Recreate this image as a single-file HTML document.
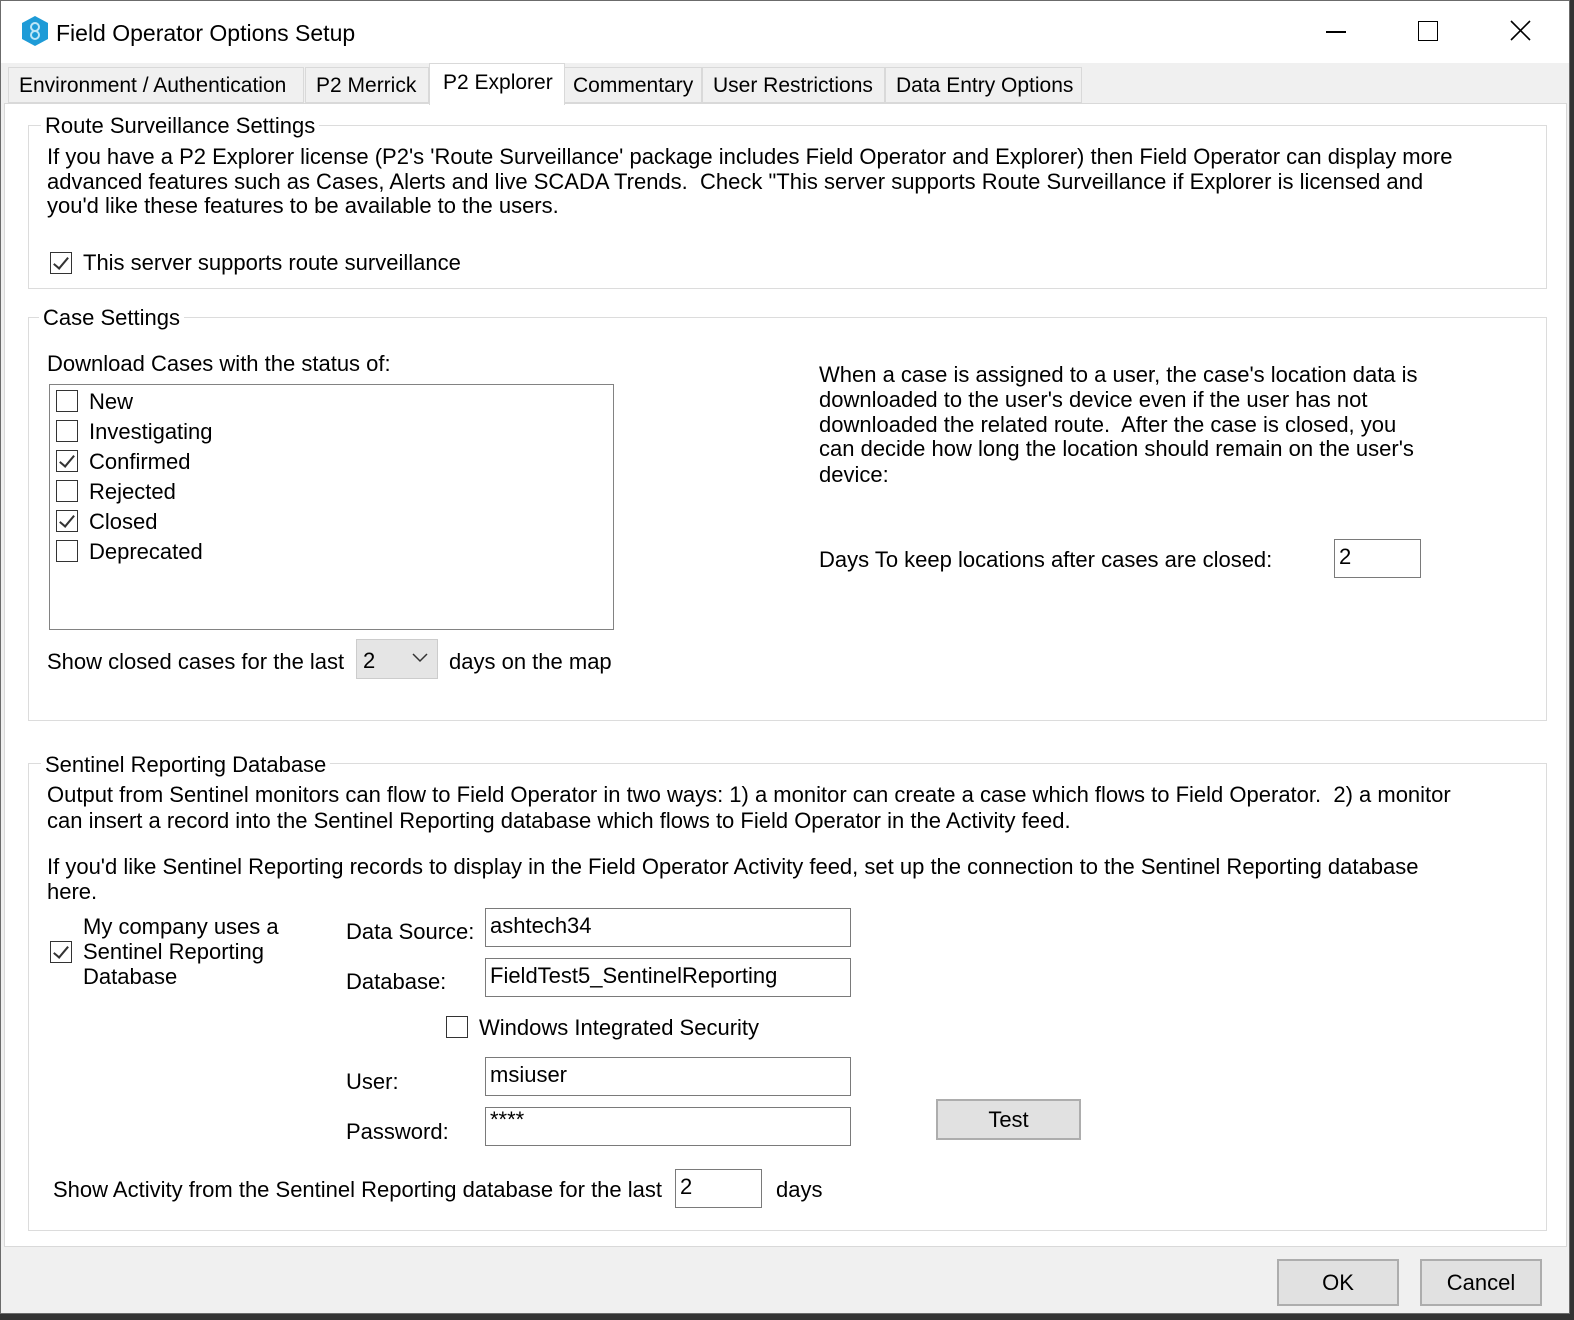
<!DOCTYPE html>
<html><head><style>
*{margin:0;padding:0;box-sizing:border-box}
body{width:1574px;height:1320px;background:#333;position:relative;overflow:hidden;font-family:"Liberation Sans",sans-serif;font-size:22px;color:#000}
.a{position:absolute;white-space:nowrap;line-height:25px}
.win{position:absolute;left:0;top:0;width:1570px;height:1314px;background:#f0f0f0;border:1px solid #6b6b6b}
.title{position:absolute;left:0;top:0;width:1568px;height:62px;background:#fff}
.page{position:absolute;left:3px;top:102px;width:1563px;height:1144px;background:#fff;border:1px solid #d9d9d9}
.grp{position:absolute;border:1px solid #dcdcdc}
.lg{position:absolute;background:#fff;padding:0 4px;line-height:25px;white-space:nowrap}
.cb{position:absolute;width:22px;height:22px;border:1.5px solid #333;background:#fff}
.cb.c::after{content:"";position:absolute;left:6px;top:1px;width:6px;height:13px;border:solid #333;border-width:0 2px 2px 0;transform:rotate(40deg)}
.tb{position:absolute;border:1.5px solid #7a7a7a;background:#fff;padding-left:4px;line-height:34px}
.tab{position:absolute;top:66px;height:36px;background:#f0f0f0;border:1px solid #d9d9d9;line-height:36px;padding-left:10px;white-space:nowrap;font-size:21px}
.btn{position:absolute;background:#e1e1e1;border:2px solid #adadad;text-align:center}
</style></head><body>
<div class="win">
<div class="title">
<svg style="position:absolute;left:20px;top:14px" width="28" height="32" viewBox="0 0 28 32"><polygon points="14,1 27,8 27,24 14,31 1,24 1,8" fill="#1e9bd7"/><circle cx="14" cy="12" r="4" fill="none" stroke="#bfe6f7" stroke-width="2"/><circle cx="14" cy="20" r="4" fill="none" stroke="#bfe6f7" stroke-width="2"/></svg>
<div class="a" style="left:55px;top:20px;font-size:23px">Field Operator Options Setup</div>
<div style="position:absolute;left:1325px;top:30px;width:20px;height:1.5px;background:#000"></div>
<div style="position:absolute;left:1417px;top:20px;width:20px;height:20px;border:1.5px solid #000"></div>
<svg style="position:absolute;left:1509px;top:19px" width="21" height="21"><path d="M1 1 L20 20 M20 1 L1 20" stroke="#000" stroke-width="1.6"/></svg>
</div>
<div class="tab" style="left:7px;width:296px">Environment / Authentication</div>
<div class="tab" style="left:304px;width:124px">P2 Merrick</div>
<div class="tab" style="left:561px;width:140px">Commentary</div>
<div class="tab" style="left:701px;width:183px">User Restrictions</div>
<div class="tab" style="left:884px;width:197px">Data Entry Options</div>
<div class="page"></div>
<div class="tab" style="left:428px;top:62px;width:136px;height:42px;background:#fff;border-bottom:none;padding-left:13px;line-height:38px;z-index:2">P2 Explorer</div>

<div class="grp" style="left:27px;top:124px;width:1519px;height:164px"></div>
<div class="lg" style="left:40px;top:112px">Route Surveillance Settings</div>
<div class="a" style="left:46px;top:143px">If you have a P2 Explorer license (P2's 'Route Surveillance' package includes Field Operator and Explorer) then Field Operator can display more</div>
<div class="a" style="left:46px;top:168px">advanced features such as Cases, Alerts and live SCADA Trends.&nbsp; Check "This server supports Route Surveillance if Explorer is licensed and</div>
<div class="a" style="left:46px;top:192px">you'd like these features to be available to the users.</div>
<div class="cb c" style="left:49px;top:251px"></div>
<div class="a" style="left:82px;top:249px">This server supports route surveillance</div>

<div class="grp" style="left:27px;top:316px;width:1519px;height:404px"></div>
<div class="lg" style="left:38px;top:304px">Case Settings</div>
<div class="a" style="left:46px;top:350px">Download Cases with the status of:</div>
<div style="position:absolute;left:48px;top:383px;width:565px;height:246px;border:1.5px solid #828282;background:#fff"></div>
<div class="cb" style="left:55px;top:389px"></div><div class="a" style="left:88px;top:388px">New</div>
<div class="cb" style="left:55px;top:419px"></div><div class="a" style="left:88px;top:418px">Investigating</div>
<div class="cb c" style="left:55px;top:449px"></div><div class="a" style="left:88px;top:448px">Confirmed</div>
<div class="cb" style="left:55px;top:479px"></div><div class="a" style="left:88px;top:478px">Rejected</div>
<div class="cb c" style="left:55px;top:509px"></div><div class="a" style="left:88px;top:508px">Closed</div>
<div class="cb" style="left:55px;top:539px"></div><div class="a" style="left:88px;top:538px">Deprecated</div>
<div class="a" style="left:46px;top:648px">Show closed cases for the last</div>
<div style="position:absolute;left:355px;top:638px;width:82px;height:40px;background:#e5e5e5;border:1px solid #ccc"></div>
<div class="a" style="left:362px;top:647px">2</div>
<svg style="position:absolute;left:411px;top:652px" width="16" height="10"><path d="M1 1 L8 8 L15 1" fill="none" stroke="#333" stroke-width="1.5"/></svg>
<div class="a" style="left:448px;top:648px">days on the map</div>
<div class="a" style="left:818px;top:361px">When a case is assigned to a user, the case's location data is</div>
<div class="a" style="left:818px;top:386px">downloaded to the user's device even if the user has not</div>
<div class="a" style="left:818px;top:411px">downloaded the related route.&nbsp; After the case is closed, you</div>
<div class="a" style="left:818px;top:435px">can decide how long the location should remain on the user's</div>
<div class="a" style="left:818px;top:461px">device:</div>
<div class="a" style="left:818px;top:546px">Days To keep locations after cases are closed:</div>
<div class="tb" style="left:1333px;top:538px;width:87px;height:39px">2</div>

<div class="grp" style="left:27px;top:762px;width:1519px;height:468px"></div>
<div class="lg" style="left:40px;top:751px">Sentinel Reporting Database</div>
<div class="a" style="left:46px;top:781px">Output from Sentinel monitors can flow to Field Operator in two ways: 1) a monitor can create a case which flows to Field Operator.&nbsp; 2) a monitor</div>
<div class="a" style="left:46px;top:807px">can insert a record into the Sentinel Reporting database which flows to Field Operator in the Activity feed.</div>
<div class="a" style="left:46px;top:853px">If you'd like Sentinel Reporting records to display in the Field Operator Activity feed, set up the connection to the Sentinel Reporting database</div>
<div class="a" style="left:46px;top:878px">here.</div>
<div class="cb c" style="left:49px;top:940px"></div>
<div class="a" style="left:82px;top:913px">My company uses a</div>
<div class="a" style="left:82px;top:938px">Sentinel Reporting</div>
<div class="a" style="left:82px;top:963px">Database</div>
<div class="a" style="left:345px;top:918px">Data Source:</div>
<div class="tb" style="left:484px;top:907px;width:366px;height:39px">ashtech34</div>
<div class="a" style="left:345px;top:968px">Database:</div>
<div class="tb" style="left:484px;top:957px;width:366px;height:39px">FieldTest5_SentinelReporting</div>
<div class="cb" style="left:445px;top:1015px"></div>
<div class="a" style="left:478px;top:1014px">Windows Integrated Security</div>
<div class="a" style="left:345px;top:1068px">User:</div>
<div class="tb" style="left:484px;top:1056px;width:366px;height:39px">msiuser</div>
<div class="a" style="left:345px;top:1118px">Password:</div>
<div class="tb" style="left:484px;top:1106px;width:366px;height:39px;line-height:24px">****</div>
<div class="btn" style="left:935px;top:1098px;width:145px;height:41px;line-height:37px">Test</div>
<div class="a" style="left:52px;top:1176px">Show Activity from the Sentinel Reporting database for the last</div>
<div class="tb" style="left:674px;top:1168px;width:87px;height:39px">2</div>
<div class="a" style="left:775px;top:1176px">days</div>

<div class="btn" style="left:1276px;top:1258px;width:122px;height:47px;line-height:43px">OK</div>
<div class="btn" style="left:1419px;top:1258px;width:122px;height:47px;line-height:43px">Cancel</div>
</div>
</body></html>
